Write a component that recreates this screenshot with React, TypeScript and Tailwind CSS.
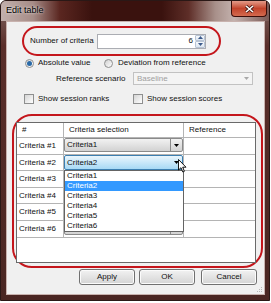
import React from "react";

const rows = [
  { label: "Criteria #1", h: "h-[17px]" },
  { label: "Criteria #2", h: "h-[16px]" },
  { label: "Criteria #3", h: "h-[17px]" },
  { label: "Criteria #4", h: "h-[16px]" },
  { label: "Criteria #5", h: "h-[17px]" },
  { label: "Criteria #6", h: "h-[17px]" },
];

const options = ["Criteria1", "Criteria2", "Criteria3", "Criteria4", "Criteria5", "Criteria6"];

function Arrow({ color = "#000" }: { color?: string }) {
  return (
    <svg width="5" height="3" viewBox="0 0 5 3">
      <path d="M0 0H5L2.5 3Z" fill={color} />
    </svg>
  );
}

function Combo({ text }: { text?: string }) {
  return (
    <div className="flex h-[14px] w-full items-center rounded-[2px] border border-[#8a8a8a] bg-linear-to-b from-[#f2f2f2] to-[#d2d2d2]">
      <span className="flex-1 pl-[2px] leading-none">{text}</span>
      <div className="flex h-full w-[12px] items-center justify-center border-l border-[#8a8a8a]">
        <Arrow />
      </div>
    </div>
  );
}

function Button({ children }: { children: React.ReactNode }) {
  return (
    <div className="flex h-[16px] w-[56px] items-center justify-center rounded-[3px] border border-[#707070] bg-linear-to-b from-[#f2f2f2] to-[#d4d4d4] shadow-[inset_0_0_0_1px_#fbfbfb]">
      {children}
    </div>
  );
}

export default function App() {
  return (
    <div className="h-[303px] w-[271px] bg-white font-['Liberation_Sans',Arial,sans-serif] text-[8px] text-[#111]">
      <div className="flex h-[301px] w-[270px] flex-col rounded-t-[6px] border border-[#2a1816] bg-[#52302c] bg-linear-to-b from-[#7e6864] via-[#5a2e2a] via-15% to-[#4a2622]">
        {/* title bar */}
        <div className="flex h-[20px] shrink-0 items-start justify-between rounded-t-[5px] bg-[#4a1c18] bg-[image:linear-gradient(to_right,#c2b0ac_0%,#a68c87_12%,#5a2620_22%,#3a120e_34%,#3a120e_60%,#5e2e28_70%,#a8908a_80%,#c4b2ae_87%,#7a5a56_100%)]">
          <span className="mt-[5px] pl-[5px] text-[9px] leading-none text-black [text-shadow:0_0_3px_#fff]">Edit table</span>
          <div className="mr-[2px] flex h-[16px] w-[36px] items-center justify-center rounded-b-[4px] border border-t-0 border-[#3c0d08] bg-linear-to-b from-[#e39a88] via-[#c2432b] to-[#d46a4e]">
            <svg width="9" height="8" viewBox="0 0 9 8">
              <path d="M1 1L8 7M8 1L1 7" stroke="#3a1410" strokeWidth="3" />
              <path d="M1 1L8 7M8 1L1 7" stroke="#fff" strokeWidth="1.6" />
            </svg>
          </div>
        </div>

        {/* client area */}
        <div className="relative mb-[5px] ml-[5px] mr-[4px] flex flex-1 flex-col border border-[#c8b2ae] bg-[#f0f0f0]">
          {/* number of criteria */}
          <div className="ml-[15px] mt-[4px] flex h-[30px] w-[199px] items-center rounded-full border-2 border-[#c4161c]">
            <span className="w-[73px] pl-[6px]">Number of criteria</span>
            <div className="flex h-[15px] w-[109px] items-center border border-[#abadb3] bg-white">
              <span className="flex-1 pr-[2px] text-right">6</span>
              <div className="flex h-[13px] w-[10px] flex-col">
                <div className="flex flex-1 items-center justify-center rounded-[1px] border border-[#b8c4d4] bg-linear-to-b from-[#f6f9fc] to-[#dde6f0]">
                  <svg width="5" height="3" viewBox="0 0 5 3">
                    <path d="M0 3H5L2.5 0Z" fill="#3c5a8a" />
                  </svg>
                </div>
                <div className="flex flex-1 items-center justify-center rounded-[1px] border border-[#b8c4d4] bg-linear-to-b from-[#f6f9fc] to-[#dde6f0]">
                  <Arrow color="#3c5a8a" />
                </div>
              </div>
            </div>
          </div>

          {/* radios */}
          <div className="ml-[18px] mt-[2px] flex h-[10px] items-center">
            <div className="flex w-[79px] items-center gap-[4px]">
              <div className="flex h-[9px] w-[9px] items-center justify-center rounded-full border border-[#8e8f8f] bg-linear-to-br from-[#d8d8d8] to-white">
                <div className="h-[5px] w-[5px] rounded-full bg-[#2a6aa8]" />
              </div>
              <span>Absolute value</span>
            </div>
            <div className="flex items-center gap-[5px]">
              <div className="h-[9px] w-[9px] rounded-full border border-[#8e8f8f] bg-linear-to-br from-[#d0d0d0] to-white" />
              <span>Deviation from reference</span>
            </div>
          </div>

          {/* reference scenario */}
          <div className="ml-[49px] mt-[4px] flex h-[13px] items-center">
            <span className="w-[77px]">Reference scenario</span>
            <div className="flex h-[13px] w-[120px] items-center border border-[#c2c2c2] bg-[#f4f4f4]">
              <span className="flex-1 pl-[3px] text-[#a0a0a0]">Baseline</span>
              <div className="flex w-[12px] items-center justify-center">
                <Arrow color="#a8a8a8" />
              </div>
            </div>
          </div>

          {/* checkboxes */}
          <div className="ml-[17px] mt-[9px] flex h-[10px] items-center">
            <div className="flex w-[109px] items-center gap-[4px]">
              <div className="h-[10px] w-[10px] border border-[#8e8f8f] bg-linear-to-br from-[#d4d4d4] to-white" />
              <span>Show session ranks</span>
            </div>
            <div className="flex items-center gap-[4px]">
              <div className="h-[10px] w-[10px] border border-[#8e8f8f] bg-linear-to-br from-[#d4d4d4] to-white" />
              <span>Show session scores</span>
            </div>
          </div>

          {/* grid */}
          <div className="ml-[5px] mt-[10px] h-[154px] w-[251px] rounded-[20px] border-2 border-[#c4161c]">
            <div className="relative ml-[2px] mt-[6px] flex h-[141px] w-[240px] flex-col border border-[#6a6a6a] bg-white">
              <div className="flex h-[15px] shrink-0 items-center border-b border-[#b4b4b4]">
                <div className="flex h-full w-[47px] items-center border-r border-[#b4b4b4] pl-[5px]">#</div>
                <div className="flex h-full w-[120px] items-center border-r border-[#b4b4b4] pl-[5px]">Criteria selection</div>
                <div className="pl-[5px]">Reference</div>
              </div>
              {rows.map((r, i) => (
                <div key={r.label} className={`flex shrink-0 border-b border-[#b4b4b4] ${r.h}`}>
                  <div className="flex w-[47px] items-center border-r border-[#b4b4b4] pl-[2px]">{r.label}</div>
                  <div className="w-[120px] border-r border-[#b4b4b4]">
                    {i === 1 ? (
                      <div className="flex h-[15px] w-full items-center rounded-[2px] border border-[#3c7fb1] bg-linear-to-b from-[#eaf6fd] to-[#a7d9f5]">
                        <span className="flex-1 pl-[2px]">Criteria2</span>
                        <div className="flex w-[12px] items-center justify-center">
                          <Arrow />
                        </div>
                      </div>
                    ) : (
                      <Combo text={i === 0 ? "Criteria1" : undefined} />
                    )}
                  </div>
                  <div className="flex-1" />
                </div>
              ))}

              {/* open dropdown list */}
              <div className="absolute left-[47px] top-[47px] flex w-[120px] flex-col border border-[#646464] bg-white">
                {options.map((o) => (
                  <div
                    key={o}
                    className={`flex h-[10px] items-center pl-[2px] ${o === "Criteria2" ? "bg-[#3399ff] text-white" : ""}`}
                  >
                    {o}
                  </div>
                ))}
              </div>

              {/* mouse pointer */}
              <svg className="absolute left-[161px] top-[36px]" width="9" height="14" viewBox="0 0 9 14">
                <path d="M0.5 0.5V11L3 8.7L4.8 13L6.4 12.3L4.7 8.2H8Z" fill="#fff" stroke="#000" strokeWidth="0.9" />
              </svg>
            </div>
          </div>

          {/* buttons */}
          <div className="ml-[72px] mt-[1px] flex items-center gap-[4px]">
            <Button>Apply</Button>
            <Button>OK</Button>
            <div className="ml-[2px]">
              <Button>Cancel</Button>
            </div>
          </div>

          {/* resize grip */}
          <svg className="absolute bottom-[1px] right-[1px]" width="7" height="7" viewBox="0 0 7 7">
            <g fill="#b8b8b8">
              <rect x="5" y="1" width="1" height="1" />
              <rect x="3" y="3" width="1" height="1" />
              <rect x="5" y="3" width="1" height="1" />
              <rect x="1" y="5" width="1" height="1" />
              <rect x="3" y="5" width="1" height="1" />
              <rect x="5" y="5" width="1" height="1" />
            </g>
          </svg>
        </div>
      </div>
    </div>
  );
}
